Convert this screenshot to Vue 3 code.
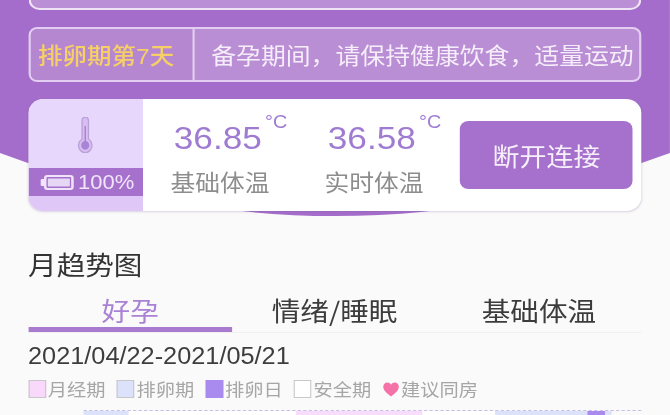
<script setup>
const legend = [
  { label: '月经期', type: 'period' },
  { label: '排卵期', type: 'fertile' },
  { label: '排卵日', type: 'ovulation' },
  { label: '安全期', type: 'safe' }
]

const tabs = ['好孕', '情绪/睡眠', '基础体温']

const temps = [
  { value: '36.85', label: '基础体温' },
  { value: '36.58', label: '实时体温' }
]

const bands = [
  { type: 'fertile', width: 41 },
  { type: 'safe', width: 152 },
  { type: 'period', width: 115 },
  { type: 'safe', width: 66 },
  { type: 'fertile', width: 84 },
  { type: 'ovulation', width: 16 },
  { type: 'fertile', width: 6 }
]
</script>

<template>
  <div class="page">
    <svg class="hero-bg" width="609" height="220" viewBox="0 0 670 220" preserveAspectRatio="none">
      <path d="M0 0H670V153Q335 279 0 153Z" fill="#a56dcb" />
    </svg>

    <section class="hero">
      <div class="top-card"></div>

      <div class="notice">
        <div class="notice-day">排卵期第<span class="num">7</span>天</div>
        <div class="notice-text">备孕期间，请保持健康饮食，适量运动</div>
      </div>

      <div class="device">
        <div class="device-left">
          <div class="thermo">
            <svg width="15" height="36" viewBox="0 0 18 36" preserveAspectRatio="none">
              <path d="M5.500 3.500a3.500 3.500 0 0 1 7 0v18.500a7.300 7.300 0 1 1-7 0z" fill="#d9bdf0" stroke="#b9a0d8" stroke-width="1.400" />
              <path d="M8.200 9h1.600v15a4.400 4.400 0 1 1-1.600 0z" fill="#a883d6" />
            </svg>
          </div>
          <div class="battery">
            <span class="battery-nub"></span>
            <span class="battery-body"></span>
            <span class="battery-text">100%</span>
          </div>
          <div class="device-foot"></div>
        </div>

        <div v-for="temp in temps" :key="temp.label" class="temp">
          <div class="temp-value">{{ temp.value }}<span class="temp-unit">°C</span></div>
          <div class="temp-label">{{ temp.label }}</div>
        </div>

        <button class="disconnect">断开连接</button>
      </div>
    </section>

    <section class="trend">
      <h2 class="trend-title">月趋势图</h2>

      <div class="tabs">
        <div v-for="(tab, i) in tabs" :key="tab" class="tab" :class="{ active: i === 0 }">{{ tab }}</div>
      </div>

      <div class="range">2021/04/22-2021/05/21</div>

      <div class="legend">
        <div v-for="item in legend" :key="item.label" class="legend-item">
          <span class="swatch" :class="item.type"></span>{{ item.label }}
        </div>
        <div class="legend-item">
          <svg class="heart" width="15" height="15" viewBox="0 0 17 15" preserveAspectRatio="none">
            <path d="M8.500 14.500C3 10.600.5 8 .5 4.800.5 2.300 2.400.6 4.600.6c1.600 0 3 .8 3.900 2.200C9.400 1.400 10.800.6 12.400.6c2.200 0 4.100 1.700 4.100 4.200 0 3.200-2.500 5.800-8 9.700z" fill="#f472a8" />
          </svg>建议同房
        </div>
      </div>

      <div class="chart">
        <span
          v-for="(band, i) in bands"
          :key="i"
          class="band"
          :class="band.type"
          :style="{ width: band.width + 'px' }"
        ></span>
      </div>
    </section>
  </div>
</template>

<style>
html,
body {
  overflow: hidden;
}
</style>

<style scoped>
.page {
  position: relative;
  width: 609.1px;
  height: 415px;
  overflow: hidden;
  background: #fafafa;
  font-family: "Noto Sans CJK SC", "Liberation Sans", sans-serif;
  transform: scaleX(1.1);
  transform-origin: left top;
  filter: blur(0.6px);
}

.hero-bg {
  position: absolute;
  top: 0;
  left: 0;
}

.hero {
  position: relative;
  padding: 0 26.4px 0 25.5px;
}

.top-card {
  height: 10px;
  box-sizing: border-box;
  border: 2px solid #efe3f6;
  border-top: 0;
  border-radius: 0 0 10px 10px;
  background: #bb8fd5;
}

.notice {
  display: flex;
  height: 55px;
  margin-top: 17px;
  box-sizing: border-box;
  border: 2px solid #e3cdf0;
  border-radius: 8px;
  background: #ba8ed4;
  white-space: nowrap;
  overflow: hidden;
}

.notice-day {
  width: 149px;
  flex: none;
  box-sizing: border-box;
  padding-left: 7px;
  border-right: 2px solid #e3cdf0;
  background: #b587d0;
  color: #f6cf66;
  font-size: 22.300px;
  font-weight: 500;
  line-height: 51px;
}

.notice-day .num {
  font-family: "Liberation Sans", sans-serif;
}

.notice-text {
  flex: 1;
  overflow: hidden;
  padding-left: 15.500px;
  color: #f5edf9;
  font-size: 22.600px;
  line-height: 51px;
}

.device {
  display: flex;
  align-items: flex-start;
  height: 112px;
  margin-top: 17px;
  overflow: hidden;
  border-radius: 14px;
  background: #fff;
  box-shadow: 0 1px 2px rgba(120, 90, 150, 0.25);
}

.device-left {
  display: flex;
  flex-direction: column;
  width: 104.5px;
  height: 100%;
  flex: none;
  background: #e8d7fd;
}

.thermo {
  display: flex;
  justify-content: center;
  height: 69px;
  box-sizing: border-box;
  padding-top: 18px;
}

.battery {
  display: flex;
  align-items: center;
  height: 28px;
  padding-left: 11.800px;
  background: #a671cd;
}

.battery-nub {
  width: 3px;
  height: 7px;
  border-radius: 1px 0 0 1px;
  background: #f0e4fa;
}

.battery-body {
  width: 27px;
  height: 15px;
  box-sizing: border-box;
  border: 2px solid #f0e4fa;
  border-radius: 3px;
  background: #e6d7f4;
  box-shadow: inset 0 0 0 1.500px #a671cd;
}

.battery-text {
  margin-left: 3.600px;
  color: #f0e4fa;
  font-family: "Liberation Sans", sans-serif;
  font-size: 20px;
}

.device-foot {
  flex: 1;
  background: #dfc8f7;
}

.temp {
  width: 140px;
  flex: none;
  text-align: center;
}

.temp-value {
  position: relative;
  display: inline-block;
  margin: 19px 4px 0 0;
  color: #9f7cd2;
  font-family: "Liberation Sans", sans-serif;
  font-size: 32px;
  line-height: 40px;
}

.temp-unit {
  position: absolute;
  top: -7px;
  left: 83px;
  font-size: 18px;
  line-height: 22px;
}

.temp-label {
  margin-top: 7px;
  color: #8d8d8d;
  font-size: 22.500px;
  line-height: 32px;
}

.disconnect {
  width: 157.300px;
  height: 68px;
  flex: none;
  margin: 22px 0 0 8.200px;
  padding: 0;
  border: 0;
  border-radius: 8px;
  background: #a671cd;
  color: #f7f0fb;
  font-family: inherit;
  font-size: 24.500px;
}

.trend {
  position: relative;
  width: 557.300px;
  margin: 35px 0 0 25.500px;
}

.trend-title {
  margin: 0;
  color: #333;
  font-size: 26px;
  font-weight: 400;
  line-height: 36px;
}

.tabs {
  display: grid;
  grid-template-columns: repeat(3, 1fr);
  margin-top: 9px;
  border-bottom: 1px solid #f1f1f1;
}

.tab {
  height: 41px;
  color: #3c3c3c;
  font-size: 26px;
  line-height: 38px;
  text-align: center;
}

.tab.active {
  box-sizing: border-box;
  border-bottom: 5px solid #a87ad0;
  color: #a982d6;
}

.range {
  margin-top: 10px;
  color: #3d3d3d;
  font-family: "Liberation Sans", sans-serif;
  font-size: 23px;
  line-height: 26px;
}

.legend {
  display: flex;
  gap: 10px;
  margin-top: 8px;
}

.legend-item {
  display: flex;
  align-items: center;
  color: #a6a6a6;
  font-size: 17.500px;
  line-height: 24px;
  white-space: nowrap;
}

.swatch {
  width: 16px;
  height: 18px;
  margin-right: 2px;
  box-sizing: border-box;
  border: 1px solid #c8c8c8;
}

.swatch.period {
  background: #f8d8fb;
}

.swatch.fertile {
  background: #dde2fb;
}

.swatch.ovulation {
  border-color: #a98bf0;
  background: #a98bf0;
}

.swatch.safe {
  background: #fff;
}

.heart {
  margin-right: 2px;
}

.chart {
  display: flex;
  height: 6px;
  margin: 9px 0 0 50px;
  border-top: 1px dashed #c9bfe6;
}

.band.period {
  background: #f8dcfb;
}

.band.fertile {
  background: #dde2fb;
}

.band.ovulation {
  background: #a98bf0;
}

.band.safe {
  background: #fff;
}
</style>
